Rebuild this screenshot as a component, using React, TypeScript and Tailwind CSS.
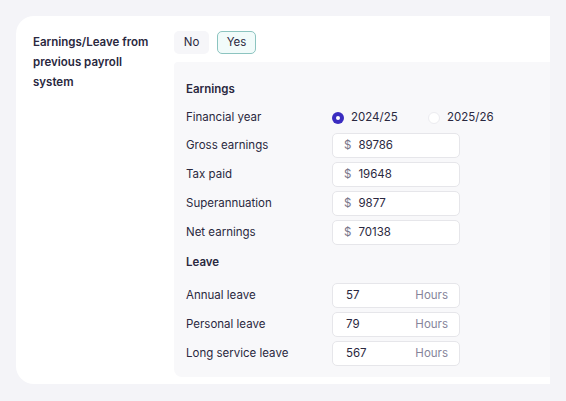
const font = { fontFamily: 'Inter, "Noto Sans", sans-serif' };

function Row({ label, children }: { label: string; children: React.ReactNode }) {
  return (
    <div className="flex items-center h-[25px] mb-[4px]">
      <div className="w-[146px] text-[11.5px] text-[#2a2840]">{label}</div>
      {children}
    </div>
  );
}

function Money({ v }: { v: string }) {
  return (
    <div className="w-[128px] h-[25px] bg-white border border-[#e6e6ea] rounded-[5px] flex items-center px-[11px] text-[11.5px] text-[#2a2840]">
      <span className="text-[#77768a] mr-[7px]">$</span>
      {v}
    </div>
  );
}

function Hours({ v }: { v: string }) {
  return (
    <div className="w-[128px] h-[25px] bg-white border border-[#e6e6ea] rounded-[5px] flex items-center justify-between pl-[13px] pr-[11px] text-[11.5px] text-[#2a2840]">
      <span>{v}</span>
      <span className="text-[#85849a]">Hours</span>
    </div>
  );
}

export default function App() {
  return (
    <div style={font} className="w-[566px] h-[401px] bg-[#f4f4f8] p-[16px] pb-[17px]">
      <div className="w-[534px] h-[368px] bg-white rounded-[18px] rounded-r-none flex pt-[15px]">
        <div className="w-[158px] pl-[17px] pr-[22px] pt-[1px] text-[11.5px] font-semibold leading-[20px] text-[#2a2840]">
          Earnings/Leave from previous payroll system
        </div>
        <div className="flex-1 flex flex-col">
          <div className="flex gap-[8px] mb-[8px]">
            <div className="w-[35px] h-[23px] bg-[#f6f6f9] rounded-[5px] flex items-center justify-center text-[11.5px] text-[#2a2840]">No</div>
            <div className="w-[39px] h-[23px] bg-[#f1fbfa] border-[1.5px] border-[#8cc4c0] rounded-[5px] flex items-center justify-center text-[11.5px] text-[#2a2840]">Yes</div>
          </div>
          <div className="w-[376px] h-[315px] bg-[#f8f8fa] rounded-tl-[4px] rounded-bl-[8px] pl-[12px] pt-[19px]">
            <div className="text-[11.5px] font-semibold text-[#2a2840] h-[17px] mb-[11px]">Earnings</div>
            <div className="flex items-center h-[18px] mb-[6px]">
              <div className="w-[146px] text-[11.5px] text-[#2a2840]">Financial year</div>
              <div className="flex items-center w-[96px] text-[11.5px] text-[#2a2840]">
                <span className="w-[12px] h-[12px] rounded-full bg-[#3a2cc0] flex items-center justify-center mr-[7px]">
                  <span className="w-[4px] h-[4px] rounded-full bg-white" />
                </span>
                2024/25
              </div>
              <div className="flex items-center text-[11.5px] text-[#2a2840]">
                <span className="w-[12px] h-[12px] rounded-full bg-white border border-[#ececf0] mr-[7px]" />
                2025/26
              </div>
            </div>
            <Row label="Gross earnings"><Money v="89786" /></Row>
            <Row label="Tax paid"><Money v="19648" /></Row>
            <Row label="Superannuation"><Money v="9877" /></Row>
            <Row label="Net earnings"><Money v="70138" /></Row>
            <div className="text-[11.5px] font-semibold text-[#2a2840] h-[17px] mt-[9px] mb-[12px]">Leave</div>
            <Row label="Annual leave"><Hours v="57" /></Row>
            <Row label="Personal leave"><Hours v="79" /></Row>
            <Row label="Long service leave"><Hours v="567" /></Row>
          </div>
        </div>
      </div>
    </div>
  );
}
